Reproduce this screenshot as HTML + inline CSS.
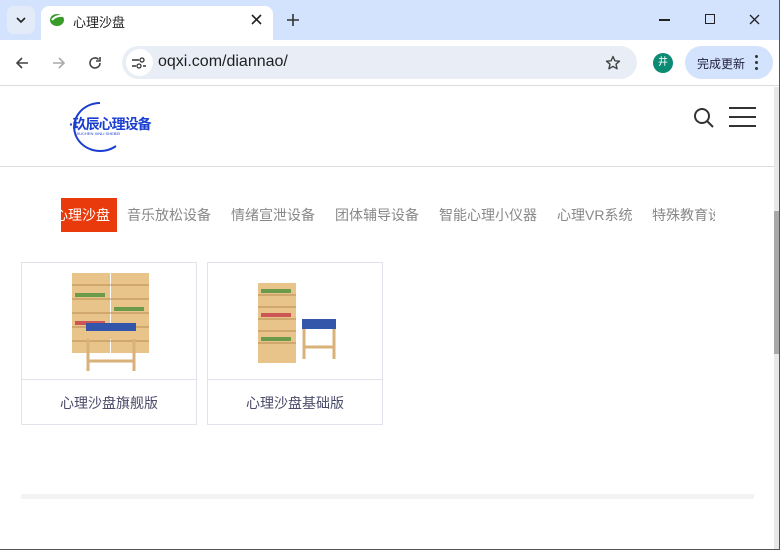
<!DOCTYPE html>
<html><head><meta charset="utf-8"><style>
*{margin:0;padding:0;box-sizing:border-box}
body{width:780px;height:550px;overflow:hidden;background:#fff;font-family:"Liberation Sans","Noto Sans CJK SC",sans-serif;position:relative}
.abs{position:absolute}
.top{left:0;top:0;width:780px;height:40px;background:#d3e3fd}
.tab{left:41px;top:6px;width:232px;height:34px;background:#fff;border-radius:8px 8px 0 0}
.bar{left:0;top:40px;width:780px;height:46px;background:#fff;border-bottom:1px solid #dadce0}
.url{left:122px;top:46px;width:515px;height:33px;background:#e9eef6;border-radius:17px}
.nav span{position:absolute;top:206px;font-size:14px;line-height:18px;color:#888}
.card{border:1px solid #e2e2ea;background:#fff}
.card .cap{position:absolute;left:0;right:0;top:116px;height:46px;border-top:1px solid #e2e2ea;text-align:center;line-height:46px;font-size:14px;color:#4a4a6a}
</style></head><body>
<div class="abs top"></div>
<div class="abs" style="left:7px;top:6px;width:28px;height:28px;background:#e3ebf9;border-radius:7px"></div>
<svg class="abs" style="left:15px;top:15px" width="12" height="10"><path d="M2 3l4 4 4-4" stroke="#222" stroke-width="1.6" fill="none"/></svg>
<div class="abs tab"></div>
<svg class="abs" style="left:49px;top:13px" width="16" height="14"><ellipse cx="8" cy="7" rx="7" ry="6" fill="#3a9a2a"/><path d="M3 7q4-5 11-4" stroke="#fff" stroke-width="2" fill="none"/></svg>
<div class="abs" style="left:73px;top:12px;font-size:13px;color:#222">心理沙盘</div>
<svg class="abs" style="left:251px;top:14px" width="11" height="11"><path d="M1 1l9 9M10 1l-9 9" stroke="#222" stroke-width="1.6"/></svg>
<svg class="abs" style="left:287px;top:14px" width="12" height="12"><path d="M6 0v12M0 6h12" stroke="#333" stroke-width="1.6"/></svg>
<div class="abs" style="left:659px;top:19px;width:11px;height:1.5px;background:#222"></div>
<div class="abs" style="left:705px;top:14px;width:10px;height:10px;border:1.3px solid #222"></div>
<svg class="abs" style="left:749px;top:14px" width="11" height="11"><path d="M1 1l9 9M10 1l-9 9" stroke="#222" stroke-width="1.3"/></svg>
<div class="abs bar"></div>
<svg class="abs" style="left:14px;top:55px" width="16" height="16"><path d="M14 8H3M8 3L3 8l5 5" stroke="#444" stroke-width="1.6" fill="none"/></svg>
<svg class="abs" style="left:51px;top:55px" width="16" height="16"><path d="M2 8h11M8 3l5 5-5 5" stroke="#aaa" stroke-width="1.6" fill="none"/></svg>
<svg class="abs" style="left:87px;top:55px" width="16" height="16"><path d="M13 8a5 5 0 1 1-1.5-3.6" stroke="#444" stroke-width="1.6" fill="none"/><path d="M13 2v4h-4" stroke="#444" stroke-width="1.6" fill="none"/></svg>
<div class="abs url"></div>
<div class="abs" style="left:126px;top:49px;width:27px;height:27px;background:#fff;border-radius:50%"></div>
<svg class="abs" style="left:131px;top:56px" width="16" height="14"><path d="M1 4h7M1 10h4M12 10h3" stroke="#333" stroke-width="1.4"/><circle cx="11" cy="4" r="2" stroke="#333" fill="none" stroke-width="1.3"/><circle cx="8" cy="10" r="2" stroke="#333" fill="none" stroke-width="1.3"/></svg>
<div class="abs" style="left:158px;top:53px;font-size:16px;color:#1f1f1f">oqxi.com/diannao/</div>
<svg class="abs" style="left:605px;top:55px" width="16" height="16"><path d="M8 1.5l1.9 4.3 4.6.4-3.5 3 1.1 4.6L8 11.4l-4.1 2.4 1.1-4.6-3.5-3 4.6-.4z" stroke="#444" stroke-width="1.4" fill="none" stroke-linejoin="round"/></svg>
<div class="abs" style="left:653px;top:53px;width:20px;height:20px;border-radius:50%;background:#0b8a74;color:#fff;font-size:10px;text-align:center;line-height:20px">井</div>
<div class="abs" style="left:685px;top:46px;width:88px;height:33px;background:#d3e3fd;border-radius:17px"></div>
<div class="abs" style="left:697px;top:55px;font-size:12px;color:#1f1f3f">完成更新</div>
<div class="abs" style="left:755px;top:55px;width:3px;height:3px;border-radius:50%;background:#333"></div>
<div class="abs" style="left:755px;top:61px;width:3px;height:3px;border-radius:50%;background:#333"></div>
<div class="abs" style="left:755px;top:67px;width:3px;height:3px;border-radius:50%;background:#333"></div>
<!-- page -->
<div class="abs" style="left:0;top:87px;width:774px;height:80px;border-bottom:1px solid #ddd"></div>
<svg class="abs" style="left:66px;top:98px" width="90" height="58"><path d="M34 5 A26 24 0 1 0 50 48" stroke="#1a3fd0" stroke-width="2" fill="none"/></svg>
<div class="abs" style="left:69px;top:114px;font-size:14px;font-weight:bold;color:#1a3fd0;letter-spacing:-1px;white-space:nowrap">·玖辰心理设备</div>
<div class="abs" style="left:76px;top:131px;font-size:4px;color:#1a3fd0">JIUCHEN XINLI SHEBEI</div>
<svg class="abs" style="left:693px;top:107px" width="22" height="22"><circle cx="9" cy="9" r="7" stroke="#333" stroke-width="2" fill="none"/><path d="M14 14l6 6" stroke="#333" stroke-width="2"/></svg>
<div class="abs" style="left:729px;top:107px;width:27px;height:2px;background:#333"></div>
<div class="abs" style="left:729px;top:116px;width:27px;height:2px;background:#333"></div>
<div class="abs" style="left:729px;top:125px;width:27px;height:2px;background:#333"></div>
<div class="abs" style="left:61px;top:198px;width:56px;height:34px;background:#e83a0a;color:#fff;font-size:14px;line-height:34px;overflow:hidden;white-space:nowrap;text-indent:-7px">心理沙盘</div>
<div class="nav">
<span style="left:127px">音乐放松设备</span><span style="left:231px">情绪宣泄设备</span><span style="left:335px">团体辅导设备</span><span style="left:439px">智能心理小仪器</span><span style="left:557px">心理VR系统</span><span style="left:652px;width:63px;overflow:hidden;white-space:nowrap">特殊教育设备</span>
</div>
<div class="abs card" style="left:21px;top:262px;width:176px;height:163px">
<svg class="abs" style="left:48px;top:10px" width="82" height="100"><rect x="2" y="0" width="38" height="80" fill="#e8c48a"/><rect x="41" y="0" width="38" height="80" fill="#e8c48a"/><g stroke="#b88a50" stroke-width="1"><path d="M2 12h77M2 26h77M2 40h77M2 54h77M2 68h77"/></g><g fill="#6a9a4a"><rect x="5" y="20" width="30" height="4"/><rect x="44" y="34" width="30" height="4"/><rect x="5" y="48" width="30" height="4" fill="#c55"/></g><rect x="16" y="50" width="50" height="10" fill="#3355aa"/><rect x="14" y="58" width="54" height="8" fill="#e8c48a"/><path d="M18 66v32M64 66v32M18 88h46" stroke="#d9b27a" stroke-width="3"/></svg>
<div class="cap">心理沙盘旗舰版</div></div>
<div class="abs card" style="left:207px;top:262px;width:176px;height:163px">
<svg class="abs" style="left:48px;top:20px" width="82" height="84"><rect x="2" y="0" width="38" height="80" fill="#e8c48a"/><g stroke="#b88a50"><path d="M2 12h38M2 24h38M2 36h38M2 48h38M2 60h38"/></g><g fill="#6a9a4a"><rect x="5" y="6" width="30" height="4"/><rect x="5" y="30" width="30" height="4" fill="#c55"/><rect x="5" y="54" width="30" height="4"/></g><rect x="46" y="36" width="34" height="10" fill="#3355aa"/><path d="M48 46v30M78 46v30M48 64h30" stroke="#d9b27a" stroke-width="3"/></svg>
<div class="cap">心理沙盘基础版</div></div>
<div class="abs" style="left:21px;top:494px;width:733px;height:5px;background:#f2f3f5"></div>
<div class="abs" style="left:774px;top:87px;width:5px;height:463px;background:#e8e8e8"></div>
<div class="abs" style="left:774px;top:211px;width:5px;height:143px;background:#a8a8a8"></div>
<div class="abs" style="left:779px;top:0;width:1px;height:550px;background:#555"></div>
<div class="abs" style="left:0;top:549px;width:780px;height:1px;background:#555"></div>
</body></html>
